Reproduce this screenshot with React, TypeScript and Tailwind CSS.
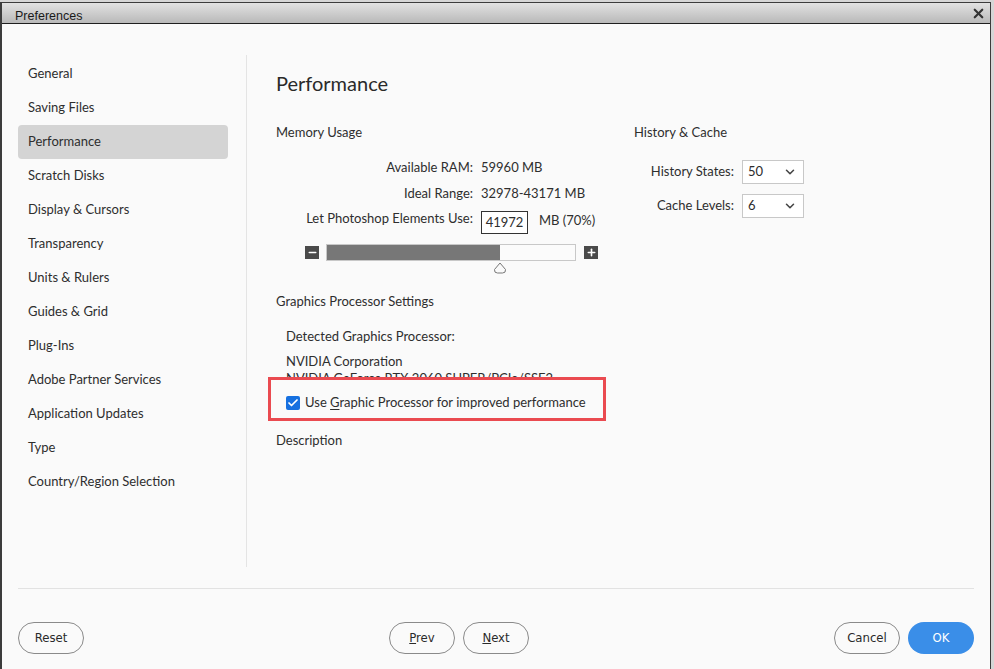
import { Check, ChevronDown, Minus, Plus, X } from 'lucide-react'

const NAV = [
  'General', 'Saving Files', 'Performance', 'Scratch Disks', 'Display & Cursors',
  'Transparency', 'Units & Rulers', 'Guides & Grid', 'Plug-Ins',
  'Adobe Partner Services', 'Application Updates', 'Type', 'Country/Region Selection',
]

const UI_FONT = "font-['Lato','Noto_Sans',sans-serif]"
const BTN_FONT = "font-['DejaVu_Sans_Condensed','DejaVu_Sans',sans-serif] font-stretch-condensed"

function Select({ value }: { value: string }) {
  return (
    <div className="flex h-6 w-[62px] items-center justify-between border border-[#c8c8c8] bg-white pl-[5px] pr-[6px] text-[13px] text-[#2c2c2c]">
      <span>{value}</span>
      <ChevronDown size={14} strokeWidth={2.6} className="text-[#444]" />
    </div>
  )
}

function PillButton({ children, primary }: { children: React.ReactNode; primary?: boolean }) {
  return (
    <button
      type="button"
      className={`h-8 w-[66px] rounded-full text-[13px] ${BTN_FONT} ${
        primary ? 'bg-[#3a8ee8] text-white' : 'border border-[#8a8a8a] bg-[#fafafa] text-[#2a2a2a]'
      }`}
    >
      {children}
    </button>
  )
}

export default function App() {
  return (
    <div className="h-[669px] w-[994px] overflow-hidden bg-[#d6d6d6] pr-[3px] pt-[2px]">
      <div className="flex h-[667px] flex-col border-l-2 border-r border-t border-[#3c3c3c] bg-[#fafafa]">
        {/* title bar */}
        <div className="flex h-[21px] shrink-0 items-center justify-between border-b border-[#1e1e1e] bg-gradient-to-b from-[#e2e2e2] to-[#b9b9b9] pl-[13px] pr-[4px] pt-px">
          <span className="mt-[5px] font-['Liberation_Sans',sans-serif] text-[12.5px] text-[#1a1a1a]">Preferences</span>
          <X size={15} strokeWidth={3.5} className="text-[#333]" />
        </div>

        {/* body */}
        <div className={`flex h-[564px] shrink-0 ${UI_FONT} text-[13px] text-[#2e2e2e]`}>
          <nav className="w-[244px] shrink-0 pl-[16px] pr-[18px] pt-[33px]">
            {NAV.map((item) => (
              <div
                key={item}
                className={`flex h-[34px] items-center rounded-[4px] pl-[10px] ${item === 'Performance' ? 'bg-[#d4d4d4]' : ''}`}
              >
                {item}
              </div>
            ))}
          </nav>
          <div className="mb-[21px] mt-[31px] w-px shrink-0 bg-[#e4e4e4]" />

          <main className="flex-1 pl-[29px]">
            <h1 className="mt-[45px] h-7 text-[20px] leading-7 text-[#2a2a2a]">Performance</h1>

            <div className="mt-[26px] flex">
              {/* memory */}
              <section className="w-[358px] shrink-0">
                <div className="h-[18px] leading-[18px]">Memory Usage</div>
                <div className="mt-[17px] grid grid-cols-[197px_auto] gap-x-2">
                  <div className="h-[19px] text-right">Available RAM:</div>
                  <div className="h-[19px]">59960 MB</div>
                  <div className="mt-[7px] h-[19px] text-right">Ideal Range:</div>
                  <div className="mt-[7px] h-[19px]">32978-43171 MB</div>
                  <div className="mt-[8px] h-[23px] text-right leading-[15px]">Let Photoshop Elements Use:</div>
                  <div className="mt-[8px] flex h-[23px] items-start">
                    <div className="flex h-[23px] w-[47px] items-center justify-center border border-[#333] bg-white">41972</div>
                    <span className="ml-[11px] leading-[18px]">MB (70%)</span>
                  </div>
                </div>

                <div className="ml-[29px] mt-[10px] flex h-[17px] items-center">
                  <div className="flex h-[13px] w-[14px] items-center justify-center bg-[#4a4a4a]">
                    <Minus size={11} strokeWidth={3.5} className="text-white" />
                  </div>
                  <div className="relative ml-[7px] h-[17px] w-[250px] border border-[#c8c8c8] bg-[#fbfbfb]">
                    <div className="h-full w-[173px] bg-[#777]" />
                    <svg className="absolute left-[166px] top-[17px]" width="14" height="12" viewBox="0 0 14 12">
                      <path d="M7 1 L12.5 7.5 Q13 11 9.5 11 H4.5 Q1 11 1.5 7.5 Z" fill="#fafafa" stroke="#777" strokeWidth="1" />
                    </svg>
                  </div>
                  <div className="ml-[8px] flex h-[13px] w-[14px] items-center justify-center bg-[#4a4a4a]">
                    <Plus size={11} strokeWidth={3.5} className="text-white" />
                  </div>
                </div>

                <div className="mt-[31px] h-[18px] leading-[18px]">Graphics Processor Settings</div>
                <div className="ml-[10px] mt-[17px] h-[18px] leading-[18px]">Detected Graphics Processor:</div>
                <div className="ml-[10px] mt-[8px] h-[24px] overflow-hidden leading-[17px]">
                  <div>NVIDIA Corporation</div>
                  <div>NVIDIA GeForce RTX 2060 SUPER/PCIe/SSE2</div>
                </div>
                <div className="-ml-[8px] flex h-[44px] w-[338px] items-center border-[3px] border-[#ea4a50] pl-[15px] pt-[8px]">
                  <div className="flex h-[14px] w-[14px] items-center justify-center rounded-[2px] bg-[#1670e0]">
                    <Check size={12} strokeWidth={3.5} className="text-white" />
                  </div>
                  <span className="ml-[5px]">
                    Use <span className="underline underline-offset-2">G</span>raphic Processor for improved performance
                  </span>
                </div>
                <div className="mt-[10px] h-[18px] leading-[18px]">Description</div>
              </section>

              {/* history */}
              <section className="flex-1">
                <div className="h-[18px] leading-[18px]">History &amp; Cache</div>
                <div className="mt-[19px] grid grid-cols-[100px_auto] items-center gap-x-2 gap-y-[10px]">
                  <div className="text-right">History States:</div>
                  <Select value="50" />
                  <div className="text-right">Cache Levels:</div>
                  <Select value="6" />
                </div>
              </section>
            </div>
          </main>
        </div>

        {/* footer */}
        <div className="mx-[16px] h-px bg-[#e2e2e2]" />
        <div className="flex items-center justify-between px-[16px] pt-[33px]">
          <PillButton>Reset</PillButton>
          <div className="flex gap-2">
            <PillButton><span className="underline">P</span>rev</PillButton>
            <PillButton><span className="underline">N</span>ext</PillButton>
          </div>
          <div className="flex gap-2">
            <PillButton>Cancel</PillButton>
            <PillButton primary>OK</PillButton>
          </div>
        </div>
      </div>
    </div>
  )
}
